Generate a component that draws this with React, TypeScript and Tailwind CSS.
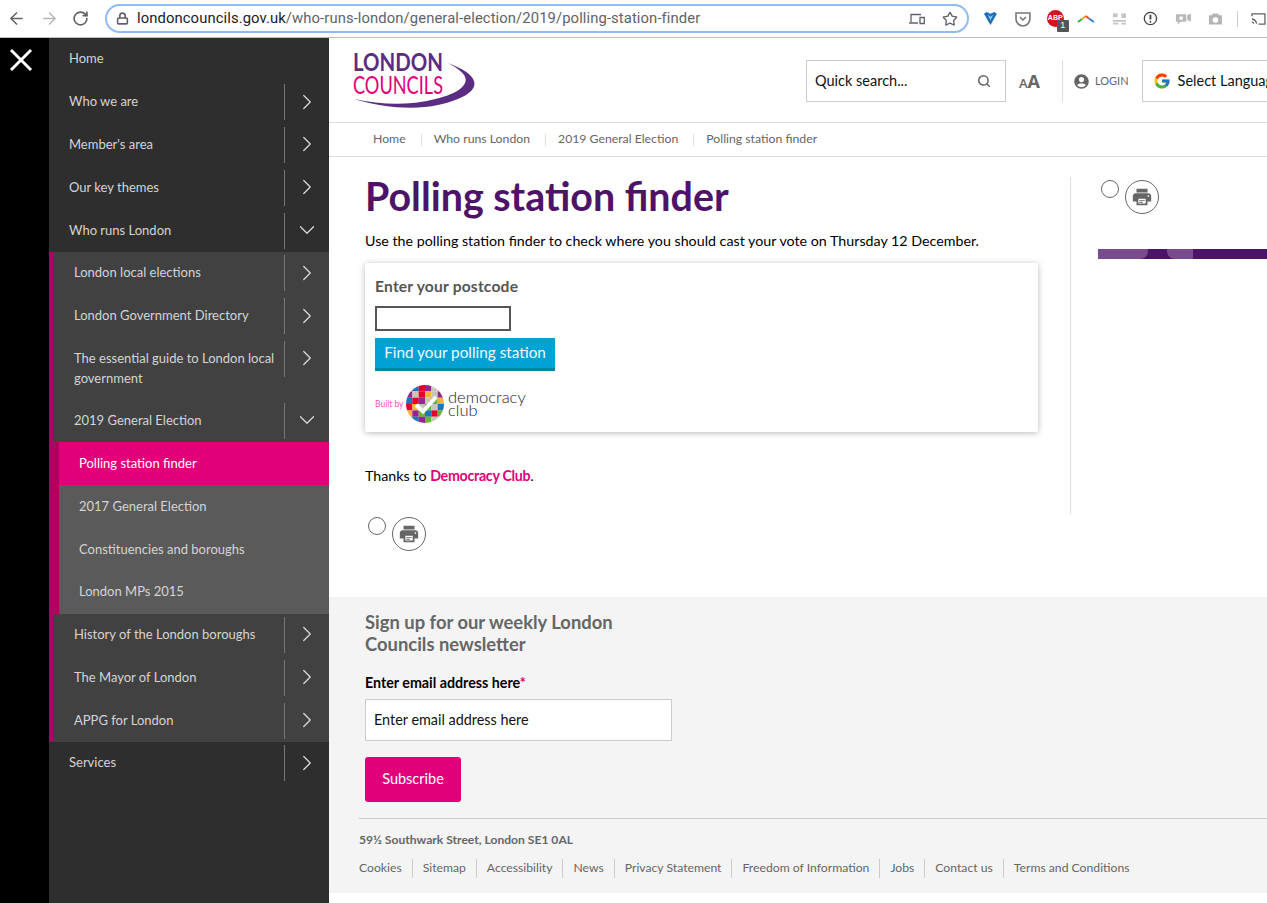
import { ArrowLeft, ArrowRight, RotateCw, Lock, Star, Search, ChevronRight, ChevronDown } from "lucide-react";
import { FcGoogle } from "react-icons/fc";
import { FaUserCircle } from "react-icons/fa";

type NavItem = { label: string; open?: boolean; noArrow?: boolean; tall?: boolean };

const topItems: NavItem[] = [
  { label: "Home", noArrow: true },
  { label: "Who we are" },
  { label: "Member's area" },
  { label: "Our key themes" },
  { label: "Who runs London", open: true },
];

const subItemsA: NavItem[] = [
  { label: "London local elections" },
  { label: "London Government Directory" },
  { label: "The essential guide to London local government", tall: true },
  { label: "2019 General Election", open: true },
];

const subSubItems = ["Polling station finder", "2017 General Election", "Constituencies and boroughs", "London MPs 2015"];

const subItemsB: NavItem[] = [
  { label: "History of the London boroughs" },
  { label: "The Mayor of London" },
  { label: "APPG for London" },
];

const crumbs = ["Home", "Who runs London", "2019 General Election", "Polling station finder"];

const footerLinks = ["Cookies", "Sitemap", "Accessibility", "News", "Privacy Statement", "Freedom of Information", "Jobs", "Contact us", "Terms and Conditions"];

const mosaic = [
  "#f5b335", "#1b75bb", "#e4002b", "#93278f", "#c9c5b8", "#f5b335",
  "#93278f", "#c9c5b8", "#e4002b", "#f5b335", "#c9c5b8", "#93278f",
  "#1b75bb", "#e4002b", "#93278f", "#c9c5b8", "#6db33f", "#f5b335",
  "#e4002b", "#f5b335", "#c9c5b8", "#6db33f", "#c9c5b8", "#1b75bb",
  "#f5b335", "#93278f", "#6db33f", "#1b75bb", "#e4002b", "#6db33f",
  "#6db33f", "#1b75bb", "#93278f", "#6db33f", "#c9c5b8", "#f5b335",
];

function NavRow({ item, indent }: { item: NavItem; indent: string }) {
  return (
    <div className={`flex items-center justify-between ${item.tall ? "h-[62px]" : "h-[42.8px]"} ${indent}`}>
      <span className={`block w-[210px] leading-[20px] ${item.tall ? "pb-[1px]" : "pb-[2px]"}`}>{item.label}</span>
      {!item.noArrow && (
        <span className={`flex w-[45px] shrink-0 justify-center border-l border-[#777] ${item.tall ? "h-[36px] self-start mt-[3px] pt-[4px]" : "h-[36px] items-center pb-[1px]"}`}>
          {item.open ? (
            <ChevronDown size={26} strokeWidth={1.1} className="text-[#ddd]" />
          ) : (
            <ChevronRight size={26} strokeWidth={1.1} className="text-[#ddd]" />
          )}
        </span>
      )}
    </div>
  );
}

function PrintButton() {
  return (
    <div className="flex items-start gap-[6px]">
      <span className="mt-0 h-[18px] w-[18px] rounded-full border border-[#666] bg-white" />
      <span className="flex h-[34px] w-[34px] items-center justify-center rounded-full border border-[#666]">
        <svg viewBox="0 0 24 24" width="22" height="22" fill="#666">
          <path d="M19 8H5c-1.66 0-3 1.34-3 3v6h4v4h12v-4h4v-6c0-1.66-1.34-3-3-3zm-3 11H8v-5h8v5zm3-7c-.55 0-1-.45-1-1s.45-1 1-1 1 .45 1 1-.45 1-1 1zm-1-9H6v4h12V3z" />
          <path d="M9 15.2h6v1H9zM9 17.2h4v1H9z" />
        </svg>
      </span>
    </div>
  );
}

function DemocracyLogo() {
  return (
    <svg viewBox="0 0 38 38" width="38" height="38" className="shrink-0">
      <defs>
        <clipPath id="dc">
          <circle cx="19" cy="19" r="19" />
        </clipPath>
      </defs>
      <g clipPath="url(#dc)">
        {mosaic.map((c, i) => (
          <rect key={i} x={(i % 6) * 6.34} y={Math.floor(i / 6) * 6.34} width="6.4" height="6.4" fill={c} />
        ))}
      </g>
      <path d="M10 20l7 6.5L30 12" fill="none" stroke="#fff" strokeWidth="4" />
    </svg>
  );
}

function BrowserBar() {
  return (
    <div className="flex h-[38px] items-center border-b border-[#bdbdbd] bg-white pl-[7px] font-[Roboto,sans-serif]">
      <ArrowLeft size={19} strokeWidth={2} className="text-[#5f6368]" />
      <ArrowRight size={19} strokeWidth={2} className="ml-[14px] text-[#b5b7ba]" />
      <RotateCw size={17} strokeWidth={2.4} className="ml-[13px] text-[#5f6368]" />
      <div className="ml-[16px] flex h-[29px] w-[864px] items-center rounded-full border-2 border-[#8fbcf5] pl-[9px]">
        <Lock size={13} strokeWidth={3} className="text-[#5f6368]" />
        <span className="ml-[8px] text-[14.8px] tracking-[0.1px] text-[#202124]">
          londoncouncils.gov.uk<span className="text-[#5f6368]">/who-runs-london/general-election/2019/polling-station-finder</span>
        </span>
        <svg viewBox="0 0 16 12" width="16" height="12" fill="none" stroke="#5f6368" strokeWidth="1.3" className="ml-auto">
          <path d="M2 9V1.5h10M0 10h9M11 4.5h4.3v6H11z" />
        </svg>
        <Star size={16} strokeWidth={2} className="ml-[17px] mr-[9px] text-[#5f6368]" />
      </div>
      {/* extension icons */}
      <div className="relative flex h-full w-[297px] items-center">
        <svg viewBox="0 0 16 16" width="15" height="15" className="ml-[14px]">
          <path d="M1 3l3-2 4 2 4-2 3 2-7 12z" fill="#1c6fb8" />
          <path d="M5 4l3 2 3-2-3 6z" fill="#8fd0f5" />
        </svg>
        <svg viewBox="0 0 16 16" width="16" height="16" className="ml-[17px]" fill="none">
          <path d="M1 2h14v6a7 7 0 0 1-14 0z" stroke="#777" strokeWidth="1.6" />
          <path d="M5 6l3 3 3-3" stroke="#777" strokeWidth="1.6" />
        </svg>
        <span className="relative ml-[16px] flex h-[17px] w-[17px] items-center justify-center rounded-full bg-[#d3121e] font-['Liberation_Sans',sans-serif] text-[7px] font-bold text-white">
          ABP
          <span className="absolute left-[10px] top-[10px] flex h-[12px] w-[12px] items-center justify-center rounded-[1px] bg-[#555] text-[9px] font-normal">1</span>
        </span>
        <svg viewBox="0 0 18 10" width="18" height="10" className="ml-[13px]" fill="none" strokeWidth="2">
          <path d="M1 8l4-3" stroke="#35a853" />
          <path d="M5 5l4-3" stroke="#f2a11c" />
          <path d="M9 2l3 2.5" stroke="#e8453c" />
          <path d="M12 4.5L17 8" stroke="#2f7ee0" />
        </svg>
        <svg viewBox="0 0 16 14" width="15" height="14" className="ml-[17px]" fill="#c4c4c4">
          <path d="M1 1h5v4H1zM10 1h5v5h-5zM1 8h14v2H1zM1 11h6v2H1zM10 11h5v2h-5z" />
        </svg>
        <svg viewBox="0 0 16 16" width="15" height="15" className="ml-[17px]" fill="none">
          <circle cx="8" cy="8" r="6.6" stroke="#444" strokeWidth="1.4" />
          <path d="M8 4v5" stroke="#444" strokeWidth="2" />
          <path d="M8 10.5v2" stroke="#444" strokeWidth="1.6" />
        </svg>
        <svg viewBox="0 0 18 14" width="17" height="14" className="ml-[17px]" fill="#b9b9b9">
          <path d="M1 2h11v8H6l-3 3v-3H1zM13 3l4-2v9l-4-2z" />
          <circle cx="6.5" cy="6" r="2" fill="#fff" />
        </svg>
        <svg viewBox="0 0 16 14" width="15" height="14" className="ml-[16px]" fill="#b5b5b5">
          <path d="M1 3h3l1.5-2h5L12 3h3v10H1zM8 5a3 3 0 1 0 0 6 3 3 0 0 0 0-6z" />
        </svg>
        <span className="ml-[14px] h-[16px] w-px bg-[#ccc]" />
        <svg viewBox="0 0 16 14" width="15" height="14" className="ml-[13px]" fill="none" stroke="#5f6368" strokeWidth="1.4">
          <path d="M1 4V1.5h14v11H8M1 7a6 6 0 0 1 5 5M1 10a3 3 0 0 1 2 2" />
        </svg>
      </div>
    </div>
  );
}

function Sidebar() {
  return (
    <aside className="flex w-[329px] shrink-0 bg-black text-[13px] text-[#d4d4d4]">
      <div className="w-[49px] shrink-0 pl-[9px] pt-[10px]">
        <svg viewBox="0 0 24 24" width="24" height="24" stroke="#fff" strokeWidth="3" fill="none">
          <path d="M2 2l20 20M22 2L2 22" />
        </svg>
      </div>
      <nav className="w-[280px] bg-[#2e2e2e]">
        {topItems.map((item) => (
          <NavRow key={item.label} item={item} indent="pl-[20px]" />
        ))}
        <div className="border-l-[5px] border-[#ae0060] bg-[#414141]">
          {subItemsA.map((item) => (
            <NavRow key={item.label} item={item} indent="pl-[20px]" />
          ))}
          <div className="-ml-[5px] border-l-[10px] border-[#ae0060] bg-[#5a5a5a]">
            {subSubItems.map((label, i) => (
              <div key={label} className={`flex h-[42.8px] items-center pl-[20px] ${i === 0 ? "bg-[#e2007a] text-white" : ""}`}>
                {label}
              </div>
            ))}
          </div>
          {subItemsB.map((item) => (
            <NavRow key={item.label} item={item} indent="pl-[20px]" />
          ))}
        </div>
        <NavRow item={{ label: "Services" }} indent="pl-[20px]" />
      </nav>
    </aside>
  );
}

function Header() {
  return (
    <>
      <header className="flex h-[85px] items-center border-b border-[#ddd] pl-[24px] pt-[2px]">
        <svg viewBox="0 0 122 60" width="122" height="60" className="-mt-[2px] shrink-0">
          <path d="M1 49C30 58 62 60 85 55C112 49 124 40 121 31C119 24 108 18 95 13C108 20 115 26 112 33C108 43 85 50 60 53C40 55 20 53 1 49z" fill="#5a2d82" />
          <text x="0" y="21" fontFamily="Lato, sans-serif" fontSize="25" fontWeight="700" fill="#5a2d82" textLength="90" lengthAdjust="spacingAndGlyphs">LONDON</text>
          <text x="0" y="44" fontFamily="Lato, sans-serif" fontSize="25" fill="#e2007a" textLength="90" lengthAdjust="spacingAndGlyphs">COUNCILS</text>
        </svg>
        <div className="ml-[331px] flex h-[42px] w-[200px] shrink-0 items-center justify-between border border-[#ccc] pl-[8px] pr-[14px] text-[14.5px] text-[#111]">
          Quick search...
          <Search size={14} strokeWidth={2.6} className="text-[#666]" />
        </div>
        <div className="ml-[13px] flex w-[24px] shrink-0 items-baseline font-['Open_Sans',sans-serif] font-semibold text-[#666]">
          <span className="text-[13px]">A</span>
          <span className="text-[18px] font-bold">A</span>
        </div>
        <span className="ml-[19px] h-[42px] w-px shrink-0 bg-[#ddd]" />
        <FaUserCircle size={15} className="ml-[11px] shrink-0 text-[#666]" />
        <span className="ml-[6px] shrink-0 text-[11px] text-[#666]">LOGIN</span>
        <div className="ml-[13px] flex h-[42px] w-[160px] shrink-0 items-center whitespace-nowrap border border-[#ccc] pl-[10px] text-[14.5px] text-[#111]">
          <FcGoogle size={18} className="shrink-0" />
          <span className="ml-[7px]">Select Language</span>
        </div>
      </header>
      <div className="flex h-[34px] items-center border-b border-[#ddd] pl-[44px] text-[12.25px] text-[#666]">
        {crumbs.map((c, i) => (
          <span key={c} className={`flex items-center ${i > 0 ? "ml-[12px]" : ""}`}>
            {c}
            {i < crumbs.length - 1 && <span className="ml-[15px] h-[12px] w-px bg-[#ddd]" />}
          </span>
        ))}
      </div>
    </>
  );
}

function Content() {
  return (
    <div className="flex h-[440px] pt-[20px] text-[#000]">
      <div className="ml-[36px] -mt-[2px] h-[339px] w-[705px] shrink-0">
        <h1 className="text-[39.4px] font-bold leading-[42px] text-[#4d1368]">Polling station finder</h1>
        <p className="mt-[14px] text-[14.25px] leading-[20px]">
          Use the polling station finder to check where you should cast your vote on Thursday 12 December.
        </p>
        <div className="mt-[12px] h-[169px] w-[673px] rounded-[2px] bg-white px-[10px] pt-[13px] shadow-[0_1px_6px_rgba(0,0,0,0.28)]">
          <div className="text-[15.6px] font-bold leading-[20px] tracking-[0.2px] text-[#555]">Enter your postcode</div>
          <div className="mt-[10px] h-[25px] w-[136px] border-2 border-[#555]" />
          <div className="mt-[7px] flex h-[33px] w-[180px] items-center justify-center border-b-[3px] border-[#0084a8] bg-[#00a2d4] pb-[1px] text-[15.3px] text-[#eefaff]">
            Find your polling station
          </div>
          <div className="mt-[14px] flex items-center">
            <span className="w-[31px] whitespace-nowrap pt-[1px] text-[8.5px] text-[#ff50b0]">Built by</span>
            <DemocracyLogo />
            <span className="ml-[4px] text-[16.5px] font-light leading-[13px] text-[#222]">
              democracy
              <br />
              club
            </span>
          </div>
        </div>
        <p className="mt-[34px] text-[14.25px] leading-[20px]">
          Thanks to <span className="font-bold tracking-[-0.3px] text-[#e2007a]">Democracy Club</span>.
        </p>
        <div className="ml-[3px] mt-[31px]">
          <PrintButton />
        </div>
      </div>
      <div className="h-[337px] w-px shrink-0 bg-[#ddd]" />
      <div className="ml-[27px] w-[170px] shrink-0">
        <div className="ml-[3px] mt-[3px]">
          <PrintButton />
        </div>
        <div className="mt-[35px] flex h-[10px] bg-[#4d1368]">
          <span className="w-[50px] rounded-br-[8px] bg-[#7a4a8e]" />
          <span className="ml-[19px] w-[26px] rounded-bl-[8px] bg-[#7a4a8e]" />
        </div>
      </div>
    </div>
  );
}

function Footer() {
  return (
    <footer className="h-[296px] bg-[#f4f4f4] pl-[30px]">
      <div className="pl-[6px] pt-[14px]">
        <h2 className="w-[270px] text-[18.4px] font-bold leading-[22px] text-[#666]">Sign up for our weekly London Councils newsletter</h2>
        <div className="mt-[18px] text-[14.25px] font-bold leading-[20px] text-[#000]">
          Enter email address here<span className="text-[#e2007a]">*</span>
        </div>
        <div className="mt-[6px] flex h-[42px] w-[307px] items-center border border-[#ccc] bg-white pb-[1px] pl-[8px] text-[14.4px] text-[#111]">
          Enter email address here
        </div>
        <div className="mt-[16px] flex h-[45px] w-[96px] items-center justify-center rounded-[3px] bg-[#e2007a] pb-[1px] text-[14.5px] text-white">
          Subscribe
        </div>
      </div>
      <div className="mt-[16px] border-t border-[#ccc] pt-[12px]">
        <div className="text-[12.1px] font-bold leading-[18px] text-[#666]">59½ Southwark Street, London SE1 0AL</div>
        <div className="mt-[10px] flex items-center text-[12.2px] text-[#666]">
          {footerLinks.map((l, i) => (
            <span key={l} className={`flex h-[19px] items-center ${i > 0 ? "ml-[10px]" : ""}`}>
              {l}
              {i < footerLinks.length - 1 && <span className="ml-[10px] h-[19px] w-px bg-[#ccc]" />}
            </span>
          ))}
        </div>
      </div>
    </footer>
  );
}

export default function App() {
  return (
    <div className="h-[903px] w-[1267px] overflow-hidden bg-white font-[Lato,sans-serif]">
      <BrowserBar />
      <div className="flex h-[865px]">
        <Sidebar />
        <main className="w-[938px] shrink-0 overflow-hidden">
          <Header />
          <Content />
          <Footer />
        </main>
      </div>
    </div>
  );
}
